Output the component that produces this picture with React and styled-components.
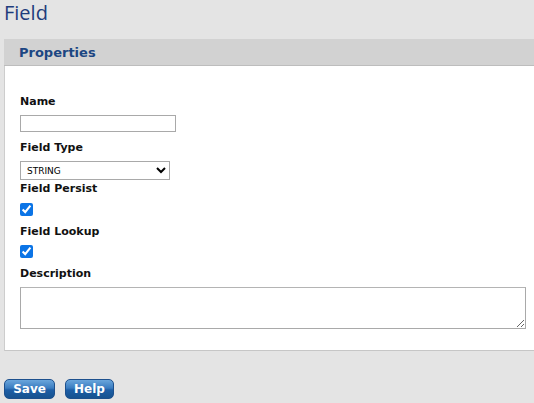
import React from 'react'
import styled, { createGlobalStyle } from 'styled-components'

const Global = createGlobalStyle`
  body {
    margin: 0;
    background: #e4e4e4;
    font-family: "DejaVu Sans", Verdana, sans-serif;
  }
`
const Page = styled.div`
  padding-left: 4px;
`
const Title = styled.h1`
  margin: 0;
  height: 39px;
  font-family: "Open Sans", "Noto Sans", sans-serif;
  font-weight: 400;
  font-size: 20px;
  line-height: 26px;
  color: #1e3c7c;
`
const Panel = styled.div`
  background: #fff;
  border-left: 1px solid #cdcdcd;
  border-bottom: 1px solid #c6c6c6;
`
const PanelHeader = styled.div`
  height: 26px;
  margin-left: -1px;
  background: #d2d2d2;
  border-bottom: 1px solid #bdbdbd;
  padding-left: 15px;
  font-size: 13px;
  font-weight: 700;
  line-height: 27px;
  color: #1c4682;
`
const PanelBody = styled.div`
  padding: 27px 8px 21px 15px;
`
const Group = styled.div`
  margin-bottom: ${p => p.$gap}px;
`
const Label = styled.label`
  display: block;
  font-size: 11px;
  font-weight: 700;
  line-height: 17px;
  color: #111;
  margin-bottom: ${p => p.$gap ?? 5}px;
`
const TextInput = styled.input`
  box-sizing: border-box;
  display: block;
  width: 156px;
  height: 17px;
  margin: 0;
  border: 1px solid #a9a9a9;
  padding: 0 2px;
`
const Select = styled.select`
  box-sizing: border-box;
  display: block;
  width: 150px;
  height: 19px;
  margin: 0;
  border: 1px solid #a9a9a9;
  border-radius: 0;
  background: #fff;
  font-family: "DejaVu Sans", Verdana, sans-serif;
  font-size: 9px;
  color: #000;
  padding: 0 2px;
`
const Check = styled.input`
  display: block;
  width: 13px;
  height: 13px;
  margin: 0;
  accent-color: #0b74e6;
`
const TextArea = styled.textarea`
  box-sizing: border-box;
  display: block;
  width: 506px;
  height: 42px;
  margin: 0;
  border: 1px solid #a9a9a9;
  border-top-color: #b4b4b4;
`
const Buttons = styled.div`
  display: flex;
  gap: 10px;
  margin-top: 28px;
`
const Button = styled.button`
  box-sizing: border-box;
  height: 20px;
  width: ${p => p.$w}px;
  padding: 0;
  border: 1px solid #1d508d;
  border-radius: 5px;
  background: linear-gradient(to bottom, #6aa6dc 0%, #3a7cc0 45%, #1d5ea6 55%, #16528f 100%);
  color: #fff;
  font-family: "DejaVu Sans", Verdana, sans-serif;
  font-size: 12px;
  font-weight: 700;
  line-height: 18px;
`

export default function App() {
  return (
    <Page>
      <Global />
      <Title>Field</Title>
      <Panel>
        <PanelHeader>Properties</PanelHeader>
        <PanelBody>
          <Group $gap={7}>
            <Label>Name</Label>
            <TextInput type="text" />
          </Group>
          <Group $gap={0}>
            <Label>Field Type</Label>
            <Select defaultValue="STRING">
              <option>STRING</option>
            </Select>
          </Group>
          <Group $gap={7}>
            <Label $gap={6}>Field Persist</Label>
            <Check type="checkbox" defaultChecked />
          </Group>
          <Group $gap={7}>
            <Label>Field Lookup</Label>
            <Check type="checkbox" defaultChecked />
          </Group>
          <Group $gap={0}>
            <Label>Description</Label>
            <TextArea />
          </Group>
        </PanelBody>
      </Panel>
      <Buttons>
        <Button $w={51}>Save</Button>
        <Button $w={49}>Help</Button>
      </Buttons>
    </Page>
  )
}
